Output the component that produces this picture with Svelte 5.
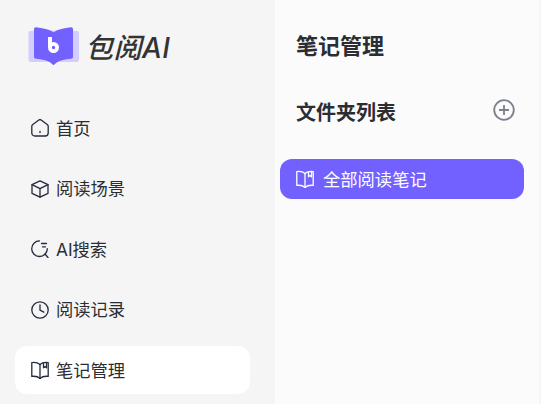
<script>
  const navItems = [
    { label: '首页', icon: 'home' },
    { label: '阅读场景', icon: 'cube' },
    { label: 'AI搜索', icon: 'search' },
    { label: '阅读记录', icon: 'clock' },
    { label: '笔记管理', icon: 'book', active: true }
  ];
</script>

<div class="page">
  <aside class="sidebar">
    <div class="brand">
      <svg class="logo" width="52" height="41" viewBox="0 0 52 41">
        <path d="M.5 5.500L6 4.500h39l6 1v28c0 1.500-1 2.500-2.500 2.500H3C1.500 36 .5 35 .5 33.500z" fill="#d4ceff"/>
        <path d="M6 3c0-1 1-2 2-1.800 7 .8 13 2 17.500 5 4.500-3 10.500-4.200 17.500-5 1-.2 2 .8 2 1.800v28c0 1-1 1.500-2 1.700-6 .8-11 1.500-14 3.500l-3.500 3-3.500-3c-3-2-8-2.700-14-3.500-1-.2-2-.7-2-1.700z" fill="#7261ff"/>
        <path d="M22 11v10.500" fill="none" stroke="#fff" stroke-width="4"/>
        <circle cx="25.500" cy="21.500" r="3.600" fill="none" stroke="#fff" stroke-width="3.800"/>
      </svg>
      <span class="brand-name">包阅AI</span>
    </div>
    <nav class="nav">
      {#each navItems as item}
        <div class="nav-item" class:active={item.active}>
          <svg class="icon" width="18" height="18" viewBox="0 0 18 18" fill="none" stroke="#262a3a" stroke-width="1.300" stroke-linecap="round" stroke-linejoin="round">
            {#if item.icon === 'home'}
              <path d="M.8 7.200c0-.6.3-1.100.7-1.500L7.500 1.200a2.500 2.500 0 0 1 3 0l6 4.500c.4.400.7.900.7 1.500V14a3 3 0 0 1-3 3H3.800a3 3 0 0 1-3-3z"/>
              <path d="M9 12.500v1"/>
            {:else if item.icon === 'cube'}
              <path d="M9 .8l8 3.800v8.800l-8 3.800-8-3.800V4.600z"/>
              <path d="M1 4.600l8 4 8-4M9 8.600v8.600"/>
            {:else if item.icon === 'search'}
              <path d="M8.500 .9a7.800 7.800 0 1 0 7.800 7.800"/>
              <path d="M10.500 3.500h5M11.500 6.800h3M14 14l3 3.500"/>
            {:else if item.icon === 'clock'}
              <circle cx="9" cy="9" r="8.200"/>
              <path d="M9 4v5.200l3.800 2"/>
            {:else}
              <path d="M9 3.500C7 1.800 4 1.200.8 1.600v13.800c3.200-.4 6.200.2 8.200 2 2-1.800 5-2.400 8.200-2V1.600C14 1.200 11 1.800 9 3.500z"/>
              <path d="M9 3.500v14M12.500 1.800v5l1.500-1.200 1.500 1.200v-5"/>
            {/if}
          </svg>
          <span class="label">{item.label}</span>
        </div>
      {/each}
    </nav>
  </aside>
  <main class="content">
    <h1>笔记管理</h1>
    <div class="folders-head">
      <h2>文件夹列表</h2>
      <svg width="22" height="22" viewBox="0 0 22 22" fill="none" stroke="#7c7f8c" stroke-width="1.800">
        <circle cx="11" cy="11" r="9.800"/>
        <path d="M11 6v10M6 11h10"/>
      </svg>
    </div>
    <div class="folder">
      <svg width="18" height="18" viewBox="0 0 18 18" fill="none" stroke="#fff" stroke-width="1.300" stroke-linejoin="round">
        <path d="M9 3.500C7 1.800 4 1.200.8 1.600v13.800c3.200-.4 6.200.2 8.200 2 2-1.800 5-2.400 8.200-2V1.600C14 1.200 11 1.800 9 3.500z"/>
        <path d="M9 3.500v14M12.500 1.800v5l1.500-1.200 1.500 1.200v-5"/>
      </svg>
      <span class="label">全部阅读笔记</span>
    </div>
  </main>
</div>

<style>
  :global(body) {
    margin: 0;
    background: #f5f5f5;
  }

  .page {
    display: flex;
    width: 541px;
    height: 404px;
    overflow: hidden;
    background: #f5f5f5;
    font-family: "Inter", "Noto Sans CJK SC", sans-serif;
    color: #2b2d33;
  }

  .sidebar {
    width: 275px;
    flex: none;
    box-sizing: border-box;
    padding: 25px 25px 0 15px;
  }

  .brand {
    display: flex;
    align-items: center;
    gap: 5px;
    padding-left: 13px;
    height: 42px;
  }

  .brand-name {
    font-size: 28px;
    font-style: italic;
    font-weight: 500;
    letter-spacing: 0.5px;
    color: #333;
  }

  .nav {
    display: flex;
    flex-direction: column;
    gap: 12.5px;
    margin-top: 37px;
  }

  .nav-item {
    display: flex;
    align-items: center;
    gap: 7px;
    height: 48px;
    padding-left: 16px;
    border-radius: 12px;
    font-size: 17.3px;
  }

  .nav-item.active {
    background: #fff;
  }

  .label {
    margin-bottom: 2px;
  }

  .content {
    width: 264px;
    flex: none;
    box-sizing: border-box;
    background: #fbfbfc;
    padding: 0 15px 0 5px;
  }

  h1 {
    margin: 31px 0 0 16px;
    font-size: 22px;
    line-height: 30px;
    font-weight: 700;
  }

  .folders-head {
    display: flex;
    align-items: center;
    justify-content: space-between;
    margin: 34px 0 0 16px;
    height: 30px;
    padding-right: 9px;
  }

  h2 {
    margin: 2px 0 0;
    font-size: 20px;
    font-weight: 700;
  }

  .folder {
    display: flex;
    align-items: center;
    gap: 9px;
    height: 40px;
    margin-top: 34px;
    padding-left: 16px;
    border-radius: 12px;
    background: #7261ff;
    color: #fff;
    font-size: 17.3px;
  }
</style>
